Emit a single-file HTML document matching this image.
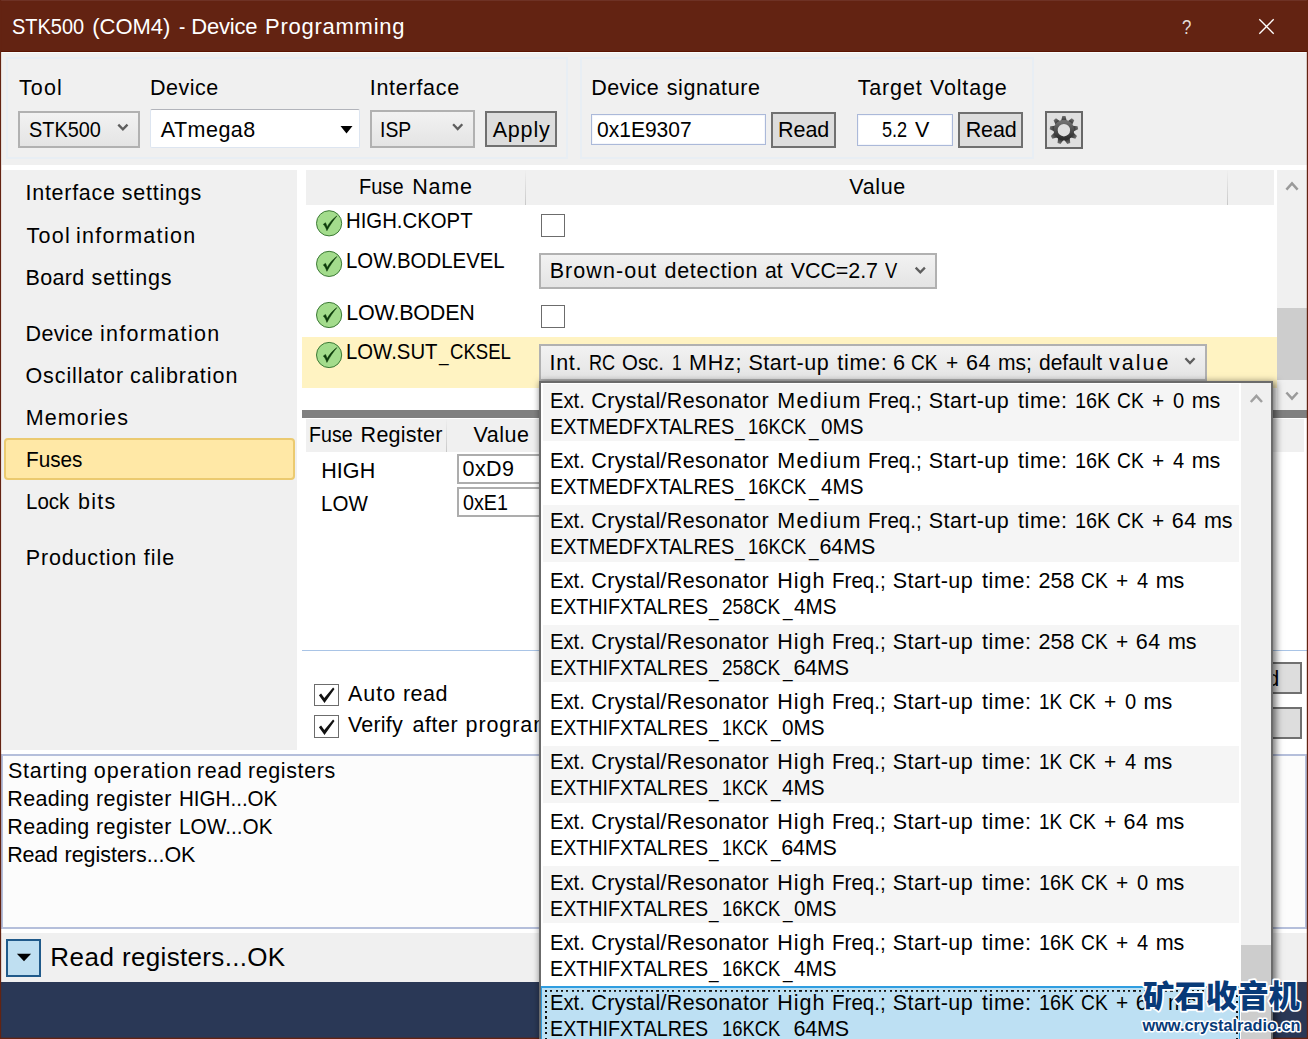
<!DOCTYPE html>
<html lang="en">
<head>
<meta charset="utf-8">
<title>STK500 (COM4) - Device Programming</title>
<style>
html,body{margin:0;padding:0;background:#fff;}
body{width:1308px;height:1039px;overflow:hidden;position:relative;font-family:"Liberation Sans",sans-serif;}
#w{position:absolute;left:0;top:0;width:1308px;height:1039px;overflow:hidden;background:#fff;}
#w div,#w span,#w svg{position:absolute;box-sizing:border-box;}
.t{white-space:pre;line-height:30px;font-family:"Liberation Sans",sans-serif;}
.g{background:#f0f0f0;}
.grp{border:2px solid #e8eef4;}
.cmb{border:2px solid #b1b1b1;background:linear-gradient(#f2f2f2,#e4e4e4);}
.btn{border:2px solid #707070;background:#dddddd;}
.inp{border:1px solid #abb9d9;background:#fff;box-shadow:inset 0 0 0 1px #f4f6fb;}
.inp2{border:2px solid #adadad;background:#fff;}
.chk{border:1px solid #6c6c6c;background:#fff;}
.pbg{left:542.8px;width:696.6px;height:57px;background:#f5f5f5;}
.psel{left:541.3px;width:698.7px;height:60px;background:#bde0f3;border:1px solid #2f9de0;border-top-width:2px;}
.psel:after{content:"";position:absolute;left:2.4px;top:2.2px;right:1px;bottom:-4px;
background:repeating-linear-gradient(90deg,#111 0 2.2px,transparent 2.2px 5.3px) 0 0/100% 1.8px no-repeat,
repeating-linear-gradient(180deg,#111 0 2px,transparent 2px 5.3px) 0 0/2px 100% no-repeat,
repeating-linear-gradient(180deg,#111 0 2px,transparent 2px 5.3px) 100% 0/2px 100% no-repeat;}
</style>
</head>
<body>
<div id="w">
<!-- toolbar -->
<div style="left:0;top:0;width:1308px;height:52px;background:#632312;border-top:1px solid #6e3225;border-bottom:1px solid #5a1402"></div>
<div class="g" style="left:1px;top:52px;width:1306px;height:112.5px;border-top:1px solid #fafdfd;border-left:1px solid #fafdfd"></div>
<div class="grp" style="left:6px;top:57px;width:562px;height:101.5px"></div>
<div class="grp" style="left:580px;top:57px;width:454px;height:101.5px"></div>
<div class="cmb" style="left:18px;top:110.5px;width:121.5px;height:37.2px"></div>
<div style="left:150.2px;top:109px;width:209.6px;height:38.5px;background:#fff;border:1px solid #dde5f0;border-top-color:#b2b4bb;border-radius:2px"></div>
<div class="cmb" style="left:370px;top:110px;width:105px;height:37.7px"></div>
<div class="btn" style="left:485px;top:111px;width:71.7px;height:35.7px"></div>
<div class="inp" style="left:591px;top:114.3px;width:174.7px;height:30.7px"></div>
<div class="btn" style="left:771px;top:112.3px;width:65px;height:35.4px"></div>
<div class="inp" style="left:856.7px;top:114.3px;width:96px;height:31.4px"></div>
<div class="btn" style="left:958.3px;top:112.3px;width:64.4px;height:35.4px"></div>
<div class="btn" style="left:1045px;top:111px;width:38px;height:37.7px;background:#dfdfdf;border-color:#686868"></div>
<!-- nav -->
<div class="g" style="left:2px;top:170px;width:295px;height:580px"></div>
<div style="left:3.5px;top:438px;width:291px;height:41.7px;background:#ffe8a6;border:2px solid #ebca70;border-radius:4px"></div>
<!-- fuse table -->
<div class="g" style="left:306px;top:170.3px;width:968px;height:34.3px"></div>
<div style="left:524.5px;top:170.3px;width:1px;height:34.3px;background:linear-gradient(#efefef,#c8c8c8)"></div>
<div style="left:1227px;top:170.3px;width:1px;height:34.3px;background:linear-gradient(#efefef,#c8c8c8)"></div>
<div style="left:302px;top:337px;width:975.2px;height:51px;background:#fff3c2"></div>
<div class="g" style="left:1277.2px;top:170px;width:29.6px;height:240px"></div>
<div style="left:1277.2px;top:308px;width:29.6px;height:72.3px;background:#cdcdcd"></div>
<div class="chk" style="left:541px;top:213.5px;width:24px;height:23px"></div>
<div class="chk" style="left:541px;top:305px;width:24px;height:22.5px"></div>
<div class="cmb" style="left:539.3px;top:252.7px;width:397.4px;height:36.6px"></div>
<div class="cmb" style="left:539.3px;top:344px;width:667.5px;height:36.6px"></div>
<div style="left:302px;top:410px;width:1004.8px;height:7.8px;background:#808080"></div>
<!-- fuse register -->
<div class="g" style="left:306px;top:419.2px;width:998px;height:33.3px"></div>
<div style="left:446px;top:419.2px;width:1px;height:33.3px;background:linear-gradient(#efefef,#c8c8c8)"></div>
<div class="inp2" style="left:457px;top:454px;width:110px;height:30px"></div>
<div class="inp2" style="left:457px;top:487px;width:110px;height:30px"></div>
<div style="left:302px;top:649.7px;width:1004.8px;height:1px;background:#a9c4e6"></div>
<div class="chk" style="left:314.2px;top:683.5px;width:24.6px;height:22.2px"></div>
<div class="chk" style="left:314.2px;top:715.4px;width:24.6px;height:22.2px"></div>
<div class="btn" style="left:1200px;top:662.3px;width:101.8px;height:32.1px"></div>
<div class="btn" style="left:1200px;top:706.5px;width:101.8px;height:32.9px"></div>
<span class="t" style="left:1225.9px;top:664px;font-size:21.5px;letter-spacing:0.6px">Read</span>
<!-- output -->
<div style="left:1px;top:754px;width:1306px;height:175px;background:#fcfcfc;border:2px solid #b5bfdb"></div>
<!-- status -->
<div class="g" style="left:0;top:933.4px;width:1308px;height:48.4px"></div>
<div style="left:0;top:981.6px;width:1308px;height:58px;background:#2a3856"></div>
<div style="left:6px;top:939px;width:35px;height:38px;background:#bfdff1;border:2px solid #205a8a"></div>
<svg style="left:0;top:0" width="1308" height="1039" viewBox="0 0 1308 1039">
 <defs>
  <linearGradient id="gg" x1="0" y1="0" x2="0" y2="1"><stop offset="0" stop-color="#707070"/><stop offset="1" stop-color="#2e2e2e"/></linearGradient>
  <g id="ok">
   <circle r="12.6" fill="#a3dc8c" stroke="#3c7a35" stroke-width="1"/>
   <path d="M-5.8,1.0 L-3.6,-0.6 C-2.9,0.8 -2.4,2.2 -2.0,3.6 C0.6,-1.0 4.0,-4.8 7.8,-7.4 C4.4,-3.4 1.0,1.6 -2.2,7.4 C-3.0,4.8 -4.2,2.6 -5.8,1.0 Z" fill="#0c3a0a" stroke="#0c3a0a" stroke-width="0.5" stroke-linejoin="round"/>
  </g>
  <path id="chv" d="M-4.6,-2.4 L0,2.4 L4.6,-2.4" fill="none" stroke="#5e5e5e" stroke-width="2.3"/>
  <path id="sch" d="M-5.6,-3.1 L0,3.1 L5.6,-3.1" fill="none" stroke="#9a9a9a" stroke-width="2.5"/>
  <path id="tick" d="M-7.6,0.2 L-5.4,-1.6 L-2.2,3 L6.6,-7.4 L8,-6 L-2,8 Z" fill="#111"/>
 </defs>
 <!-- title buttons -->
 <path d="M1259.3,19.3 L1273.7,33.7 M1273.7,19.3 L1259.3,33.7" stroke="#fff" stroke-width="1.3" fill="none"/>
 <!-- chevrons -->
 <use href="#chv" x="122.9" y="127"/>
 <use href="#chv" x="457.7" y="126.7"/>
 <use href="#chv" x="920.3" y="270"/>
 <use href="#chv" x="1190" y="360.7"/>
 <path d="M340.5,126 h12 l-6,7.4 z" fill="#000"/>
 <path d="M16.9,953.8 h14.2 l-7.1,7.4 z" fill="#000"/>
 <use href="#sch" x="1292" y="186.5" transform="rotate(180 1292 186.5)"/>
 <use href="#sch" x="1292" y="395.6"/>
 <!-- gear -->
 <g transform="translate(1063.9,130.2)">
  <g fill="url(#gg)">
   <path id="tooth" d="M-2.9,-9 L-1.6,-14.2 L1.6,-14.2 L2.9,-9 Z"/>
   <use href="#tooth" transform="rotate(40)"/><use href="#tooth" transform="rotate(80)"/><use href="#tooth" transform="rotate(120)"/><use href="#tooth" transform="rotate(160)"/><use href="#tooth" transform="rotate(200)"/><use href="#tooth" transform="rotate(240)"/><use href="#tooth" transform="rotate(280)"/><use href="#tooth" transform="rotate(320)"/>
  </g>
  <circle r="8.3" fill="none" stroke="url(#gg)" stroke-width="4.2"/>
 </g>
 <!-- fuse ok icons -->
 <use href="#ok" x="329.1" y="223.3"/>
 <use href="#ok" x="329.1" y="263.9"/>
 <use href="#ok" x="329.1" y="315"/>
 <use href="#ok" x="329.1" y="355"/>
 <!-- ticks -->
 <use href="#tick" x="326.5" y="695"/>
 <use href="#tick" x="326.5" y="727"/>
</svg>
<span class="t" style="left:12.39px;top:12.00px;font-size:22px;letter-spacing:0.000px;color:#fff;transform:scaleX(0.9073);transform-origin:0 0;">STK500 </span>
<span class="t" style="left:92.30px;top:12.00px;font-size:22px;letter-spacing:-0.038px;color:#fff;">(COM4) </span>
<span class="t" style="left:179.00px;top:12.00px;font-size:22px;letter-spacing:0.000px;color:#fff;transform:scaleX(0.8571);transform-origin:0 0;">- </span>
<span class="t" style="left:191.30px;top:12.00px;font-size:22px;letter-spacing:-0.202px;color:#fff;">Device </span>
<span class="t" style="left:265.00px;top:12.00px;font-size:22px;letter-spacing:0.749px;color:#fff;">Programming </span>
<span class="t" style="left:1182.15px;top:12.00px;font-size:21px;letter-spacing:0.000px;color:rgba(255,255,255,.85);transform:scaleX(0.8000);transform-origin:0 0;">? </span>
<span class="t" style="left:19.00px;top:73.00px;font-size:21.5px;letter-spacing:1.112px;color:#000;">Tool </span>
<span class="t" style="left:150.00px;top:73.00px;font-size:21.5px;letter-spacing:0.508px;color:#000;">Device </span>
<span class="t" style="left:369.70px;top:73.00px;font-size:21.5px;letter-spacing:0.737px;color:#000;">Interface </span>
<span class="t" style="left:591.30px;top:73.00px;font-size:21.5px;letter-spacing:0.328px;color:#000;">Device </span>
<span class="t" style="left:666.70px;top:73.00px;font-size:21.5px;letter-spacing:0.601px;color:#000;">signature </span>
<span class="t" style="left:857.70px;top:73.00px;font-size:21.5px;letter-spacing:0.844px;color:#000;">Target </span>
<span class="t" style="left:930.00px;top:73.00px;font-size:21.5px;letter-spacing:0.821px;color:#000;">Voltage </span>
<span class="t" style="left:28.50px;top:115.00px;font-size:21.5px;letter-spacing:0.000px;color:#000;transform:scaleX(0.9250);transform-origin:0 0;">STK500 </span>
<span class="t" style="left:160.70px;top:115.00px;font-size:21.5px;letter-spacing:0.490px;color:#000;">ATmega8 </span>
<span class="t" style="left:379.80px;top:115.00px;font-size:21.5px;letter-spacing:0.000px;color:#000;transform:scaleX(0.9005);transform-origin:0 0;">ISP </span>
<span class="t" style="left:492.70px;top:115.00px;font-size:21.5px;letter-spacing:0.817px;color:#000;">Apply </span>
<span class="t" style="left:597.30px;top:115.00px;font-size:21.5px;letter-spacing:0.000px;color:#000;transform:scaleX(0.9773);transform-origin:0 0;">0x1E9307 </span>
<span class="t" style="left:778.00px;top:115.00px;font-size:21.5px;letter-spacing:-0.047px;color:#000;">Read </span>
<span class="t" style="left:882.30px;top:115.00px;font-size:21.5px;letter-spacing:0.000px;color:#000;transform:scaleX(0.8434);transform-origin:0 0;">5.2 </span>
<span class="t" style="left:915.00px;top:115.00px;font-size:21.5px;letter-spacing:0.000px;color:#000;transform:scaleX(1.0000);transform-origin:0 0;">V </span>
<span class="t" style="left:965.70px;top:115.00px;font-size:21.5px;letter-spacing:-0.147px;color:#000;">Read </span>
<span class="t" style="left:25.50px;top:178.00px;font-size:21.5px;letter-spacing:0.725px;color:#000;">Interface </span>
<span class="t" style="left:121.80px;top:178.00px;font-size:21.5px;letter-spacing:0.779px;color:#000;">settings </span>
<span class="t" style="left:26.50px;top:221.00px;font-size:21.5px;letter-spacing:1.245px;color:#000;">Tool </span>
<span class="t" style="left:75.90px;top:221.00px;font-size:21.5px;letter-spacing:1.290px;color:#000;">information </span>
<span class="t" style="left:25.50px;top:263.00px;font-size:21.5px;letter-spacing:0.321px;color:#000;">Board </span>
<span class="t" style="left:91.60px;top:263.00px;font-size:21.5px;letter-spacing:0.836px;color:#000;">settings </span>
<span class="t" style="left:25.50px;top:319.00px;font-size:21.5px;letter-spacing:0.368px;color:#000;">Device </span>
<span class="t" style="left:99.90px;top:319.00px;font-size:21.5px;letter-spacing:1.290px;color:#000;">information </span>
<span class="t" style="left:25.50px;top:361.00px;font-size:21.5px;letter-spacing:0.884px;color:#000;">Oscillator </span>
<span class="t" style="left:129.90px;top:361.00px;font-size:21.5px;letter-spacing:0.946px;color:#000;">calibration </span>
<span class="t" style="left:25.70px;top:403.00px;font-size:21.5px;letter-spacing:1.125px;color:#000;">Memories </span>
<span class="t" style="left:25.74px;top:445.00px;font-size:21.5px;letter-spacing:0.000px;color:#000;transform:scaleX(0.9648);transform-origin:0 0;">Fuses </span>
<span class="t" style="left:25.75px;top:487.00px;font-size:21.5px;letter-spacing:0.000px;color:#000;transform:scaleX(0.9538);transform-origin:0 0;">Lock </span>
<span class="t" style="left:78.00px;top:487.00px;font-size:21.5px;letter-spacing:1.231px;color:#000;">bits </span>
<span class="t" style="left:25.70px;top:543.00px;font-size:21.5px;letter-spacing:0.852px;color:#000;">Production </span>
<span class="t" style="left:143.80px;top:543.00px;font-size:21.5px;letter-spacing:0.991px;color:#000;">file </span>
<span class="t" style="left:359.07px;top:172.00px;font-size:21.5px;letter-spacing:0.000px;color:#000;transform:scaleX(0.9315);transform-origin:0 0;">Fuse </span>
<span class="t" style="left:412.30px;top:172.00px;font-size:21.5px;letter-spacing:0.769px;color:#000;">Name </span>
<span class="t" style="left:849.30px;top:172.00px;font-size:21.5px;letter-spacing:0.641px;color:#000;">Value </span>
<span class="t" style="left:346.25px;top:206.00px;font-size:21.5px;letter-spacing:0.000px;color:#000;transform:scaleX(0.9461);transform-origin:0 0;">HIGH.CKOPT </span>
<span class="t" style="left:346.25px;top:246.00px;font-size:21.5px;letter-spacing:0.000px;color:#000;transform:scaleX(0.9487);transform-origin:0 0;">LOW.BODLEVEL </span>
<span class="t" style="left:346.20px;top:298.00px;font-size:21.5px;letter-spacing:-0.199px;color:#000;">LOW.BODEN </span>
<span class="t" style="left:346.25px;top:337.00px;font-size:21.5px;letter-spacing:0.000px;color:#000;transform:scaleX(0.9453);transform-origin:0 0;">LOW.SUT</span><span class="t" style="left:439.25px;top:337.00px;font-size:21.5px;letter-spacing:0.000px;color:#000;transform:translateY(1.5px) scaleX(0.8000);transform-origin:0 0;">_</span><span class="t" style="left:449.64px;top:337.00px;font-size:21.5px;letter-spacing:0.000px;color:#000;transform:scaleX(0.8642);transform-origin:0 0;">CKSEL </span>
<span class="t" style="left:549.70px;top:256.00px;font-size:21.5px;letter-spacing:1.061px;color:#000;">Brown-out </span>
<span class="t" style="left:664.50px;top:256.00px;font-size:21.5px;letter-spacing:0.712px;color:#000;">detection </span>
<span class="t" style="left:765.40px;top:256.00px;font-size:21.5px;letter-spacing:0.000px;color:#000;transform:scaleX(0.9857);transform-origin:0 0;">at </span>
<span class="t" style="left:790.80px;top:256.00px;font-size:21.5px;letter-spacing:-0.113px;color:#000;">VCC=2.7 </span>
<span class="t" style="left:885.00px;top:256.00px;font-size:21.5px;letter-spacing:0.000px;color:#000;transform:scaleX(0.8533);transform-origin:0 0;">V </span>
<span class="t" style="left:549.50px;top:348.00px;font-size:21.5px;letter-spacing:0.665px;color:#000;">Int. </span>
<span class="t" style="left:588.86px;top:348.00px;font-size:21.5px;letter-spacing:0.000px;color:#000;transform:scaleX(0.8433);transform-origin:0 0;">RC </span>
<span class="t" style="left:621.75px;top:348.00px;font-size:21.5px;letter-spacing:0.000px;color:#000;transform:scaleX(0.9497);transform-origin:0 0;">Osc. </span>
<span class="t" style="left:671.85px;top:348.00px;font-size:21.5px;letter-spacing:0.000px;color:#000;transform:scaleX(0.8000);transform-origin:0 0;">1 </span>
<span class="t" style="left:689.00px;top:348.00px;font-size:21.5px;letter-spacing:0.805px;color:#000;">MHz; </span>
<span class="t" style="left:748.40px;top:348.00px;font-size:21.5px;letter-spacing:0.540px;color:#000;">Start-up </span>
<span class="t" style="left:837.30px;top:348.00px;font-size:21.5px;letter-spacing:0.721px;color:#000;">time: </span>
<span class="t" style="left:892.89px;top:348.00px;font-size:21.5px;letter-spacing:0.000px;color:#000;transform:scaleX(1.0091);transform-origin:0 0;">6 </span>
<span class="t" style="left:911.31px;top:348.00px;font-size:21.5px;letter-spacing:0.000px;color:#000;transform:scaleX(0.8873);transform-origin:0 0;">CK </span>
<span class="t" style="left:946.13px;top:348.00px;font-size:21.5px;letter-spacing:0.000px;color:#000;transform:scaleX(0.9727);transform-origin:0 0;">+ </span>
<span class="t" style="left:966.10px;top:348.00px;font-size:21.5px;letter-spacing:0.343px;color:#000;">64 </span>
<span class="t" style="left:997.52px;top:348.00px;font-size:21.5px;letter-spacing:0.000px;color:#000;transform:scaleX(0.9798);transform-origin:0 0;">ms; </span>
<span class="t" style="left:1038.60px;top:348.00px;font-size:21.5px;letter-spacing:0.000px;color:#000;transform:scaleX(0.9755);transform-origin:0 0;">default </span>
<span class="t" style="left:1108.90px;top:348.00px;font-size:21.5px;letter-spacing:2.065px;color:#000;">value </span>
<span class="t" style="left:308.79px;top:420.00px;font-size:21.5px;letter-spacing:0.000px;color:#000;transform:scaleX(0.9119);transform-origin:0 0;">Fuse </span>
<span class="t" style="left:360.60px;top:420.00px;font-size:21.5px;letter-spacing:0.257px;color:#000;">Register </span>
<span class="t" style="left:473.60px;top:420.00px;font-size:21.5px;letter-spacing:0.491px;color:#000;">Value </span>
<span class="t" style="left:321.20px;top:456.00px;font-size:21.5px;letter-spacing:0.092px;color:#000;">HIGH </span>
<span class="t" style="left:321.24px;top:489.00px;font-size:21.5px;letter-spacing:0.000px;color:#000;transform:scaleX(0.9552);transform-origin:0 0;">LOW </span>
<span class="t" style="left:462.50px;top:454.00px;font-size:21.5px;letter-spacing:0.422px;color:#000;">0xD9 </span>
<span class="t" style="left:462.50px;top:488.00px;font-size:21.5px;letter-spacing:0.000px;color:#000;transform:scaleX(0.9158);transform-origin:0 0;">0xE1 </span>
<span class="t" style="left:348.00px;top:679.00px;font-size:21.5px;letter-spacing:1.010px;color:#000;">Auto </span>
<span class="t" style="left:403.00px;top:679.00px;font-size:21.5px;letter-spacing:0.442px;color:#000;">read </span>
<span class="t" style="left:348.00px;top:710.00px;font-size:21.5px;letter-spacing:0.196px;color:#000;">Verify </span>
<span class="t" style="left:412.60px;top:710.00px;font-size:21.5px;letter-spacing:0.510px;color:#000;">after </span>
<span class="t" style="left:465.50px;top:710.00px;font-size:21.5px;letter-spacing:0.930px;color:#000;">programming </span>
<span class="t" style="left:8.00px;top:756.00px;font-size:21.5px;letter-spacing:0.723px;color:#000;">Starting </span>
<span class="t" style="left:93.70px;top:756.00px;font-size:21.5px;letter-spacing:1.013px;color:#000;">operation </span>
<span class="t" style="left:197.00px;top:756.00px;font-size:21.5px;letter-spacing:0.575px;color:#000;">read </span>
<span class="t" style="left:247.90px;top:756.00px;font-size:21.5px;letter-spacing:0.614px;color:#000;">registers </span>
<span class="t" style="left:7.30px;top:784.00px;font-size:21.5px;letter-spacing:0.311px;color:#000;">Reading </span>
<span class="t" style="left:95.90px;top:784.00px;font-size:21.5px;letter-spacing:0.553px;color:#000;">register </span>
<span class="t" style="left:178.84px;top:784.00px;font-size:21.5px;letter-spacing:0.000px;color:#000;transform:scaleX(0.9571);transform-origin:0 0;">HIGH...OK </span>
<span class="t" style="left:7.30px;top:812.00px;font-size:21.5px;letter-spacing:0.311px;color:#000;">Reading </span>
<span class="t" style="left:95.90px;top:812.00px;font-size:21.5px;letter-spacing:0.553px;color:#000;">register </span>
<span class="t" style="left:178.83px;top:812.00px;font-size:21.5px;letter-spacing:0.000px;color:#000;transform:scaleX(0.9665);transform-origin:0 0;">LOW...OK </span>
<span class="t" style="left:7.30px;top:840.00px;font-size:21.5px;letter-spacing:-0.247px;color:#000;">Read </span>
<span class="t" style="left:64.60px;top:840.00px;font-size:21.5px;letter-spacing:-0.045px;color:#000;">registers...OK </span>
<span class="t" style="left:50.20px;top:942.00px;font-size:26px;letter-spacing:0.501px;color:#000;">Read </span>
<span class="t" style="left:122.10px;top:942.00px;font-size:26px;letter-spacing:0.316px;color:#000;">registers...OK </span>

<svg style="left:0;top:0" width="1308" height="1039" viewBox="0 0 1308 1039"><rect x="0" y="0" width="1.15" height="1039" fill="#632312"/><rect x="1306.8" y="0" width="1.2" height="1039" fill="#632312"/><rect x="0" y="1037.7" width="1308" height="1.3" fill="#632312"/></svg>
<!-- popup -->
<div style="left:539.3px;top:381.3px;width:733.8px;height:700px;background:#fff;border:2px solid #6b6b6b;box-shadow:2px 2px 7px 1px rgba(0,0,0,.55)"></div>
<div class="pbg" style="top:384.30px"></div>
<div class="pbg" style="top:504.84px"></div>
<div class="pbg" style="top:625.38px"></div>
<div class="pbg" style="top:745.92px"></div>
<div class="pbg" style="top:866.46px"></div>
<div class="psel" style="top:986px"></div>
<div class="g" style="left:1241.2px;top:383.3px;width:29.9px;height:660px"></div>
<div style="left:1241.2px;top:944.6px;width:29.9px;height:100px;background:#cdcdcd"></div>
<svg style="left:1241px;top:385px" width="30" height="30" viewBox="0 0 30 30"><path d="M9.8,17 L15.4,10.8 L21,17" fill="none" stroke="#a0a0a0" stroke-width="2.5"/></svg>
<span class="t" style="left:549.96px;top:386.00px;font-size:21.5px;letter-spacing:0.000px;color:#000;transform:scaleX(0.9411);transform-origin:0 0;">Ext. </span>
<span class="t" style="left:591.30px;top:386.00px;font-size:21.5px;letter-spacing:0.331px;color:#000;">Crystal/Resonator </span>
<span class="t" style="left:777.30px;top:386.00px;font-size:21.5px;letter-spacing:1.308px;color:#000;">Medium </span>
<span class="t" style="left:867.74px;top:386.00px;font-size:21.5px;letter-spacing:0.000px;color:#000;transform:scaleX(0.9561);transform-origin:0 0;">Freq.; </span>
<span class="t" style="left:928.70px;top:386.00px;font-size:21.5px;letter-spacing:0.511px;color:#000;">Start-up </span>
<span class="t" style="left:1018.00px;top:386.00px;font-size:21.5px;letter-spacing:0.596px;color:#000;">time: </span>
<span class="t" style="left:1074.68px;top:386.00px;font-size:21.5px;letter-spacing:0.000px;color:#000;transform:scaleX(0.9231);transform-origin:0 0;">16K </span>
<span class="t" style="left:1117.11px;top:386.00px;font-size:21.5px;letter-spacing:0.000px;color:#000;transform:scaleX(0.8941);transform-origin:0 0;">CK </span>
<span class="t" style="left:1152.23px;top:386.00px;font-size:21.5px;letter-spacing:0.000px;color:#000;transform:scaleX(0.9727);transform-origin:0 0;">+ </span>
<span class="t" style="left:1172.80px;top:386.00px;font-size:21.5px;letter-spacing:0.000px;color:#000;transform:scaleX(0.9333);transform-origin:0 0;">0 </span>
<span class="t" style="left:1191.70px;top:386.00px;font-size:21.5px;letter-spacing:-0.010px;color:#000;">ms </span>
<span class="t" style="left:549.97px;top:412.00px;font-size:21.5px;letter-spacing:0.000px;color:#000;transform:scaleX(0.9258);transform-origin:0 0;">EXTMEDFXTALRES</span><span class="t" style="left:734.70px;top:412.00px;font-size:21.5px;letter-spacing:0.000px;color:#000;transform:translateY(1.5px) scaleX(0.8000);transform-origin:0 0;">_</span><span class="t" style="left:747.84px;top:412.00px;font-size:21.5px;letter-spacing:0.000px;color:#000;transform:scaleX(0.8557);transform-origin:0 0;">16KCK</span><span class="t" style="left:809.20px;top:412.00px;font-size:21.5px;letter-spacing:0.000px;color:#000;transform:translateY(1.5px) scaleX(0.8000);transform-origin:0 0;">_</span><span class="t" style="left:820.50px;top:412.00px;font-size:21.5px;letter-spacing:0.000px;color:#000;transform:scaleX(0.9620);transform-origin:0 0;">0MS </span>
<span class="t" style="left:549.96px;top:446.00px;font-size:21.5px;letter-spacing:0.000px;color:#000;transform:scaleX(0.9411);transform-origin:0 0;">Ext. </span>
<span class="t" style="left:591.30px;top:446.00px;font-size:21.5px;letter-spacing:0.331px;color:#000;">Crystal/Resonator </span>
<span class="t" style="left:777.30px;top:446.00px;font-size:21.5px;letter-spacing:1.308px;color:#000;">Medium </span>
<span class="t" style="left:867.74px;top:446.00px;font-size:21.5px;letter-spacing:0.000px;color:#000;transform:scaleX(0.9561);transform-origin:0 0;">Freq.; </span>
<span class="t" style="left:928.70px;top:446.00px;font-size:21.5px;letter-spacing:0.511px;color:#000;">Start-up </span>
<span class="t" style="left:1018.00px;top:446.00px;font-size:21.5px;letter-spacing:0.596px;color:#000;">time: </span>
<span class="t" style="left:1074.68px;top:446.00px;font-size:21.5px;letter-spacing:0.000px;color:#000;transform:scaleX(0.9231);transform-origin:0 0;">16K </span>
<span class="t" style="left:1117.11px;top:446.00px;font-size:21.5px;letter-spacing:0.000px;color:#000;transform:scaleX(0.8941);transform-origin:0 0;">CK </span>
<span class="t" style="left:1152.23px;top:446.00px;font-size:21.5px;letter-spacing:0.000px;color:#000;transform:scaleX(0.9727);transform-origin:0 0;">+ </span>
<span class="t" style="left:1172.80px;top:446.00px;font-size:21.5px;letter-spacing:0.000px;color:#000;transform:scaleX(0.9333);transform-origin:0 0;">4 </span>
<span class="t" style="left:1191.70px;top:446.00px;font-size:21.5px;letter-spacing:-0.010px;color:#000;">ms </span>
<span class="t" style="left:549.97px;top:472.00px;font-size:21.5px;letter-spacing:0.000px;color:#000;transform:scaleX(0.9258);transform-origin:0 0;">EXTMEDFXTALRES</span><span class="t" style="left:734.70px;top:472.00px;font-size:21.5px;letter-spacing:0.000px;color:#000;transform:translateY(1.5px) scaleX(0.8000);transform-origin:0 0;">_</span><span class="t" style="left:747.84px;top:472.00px;font-size:21.5px;letter-spacing:0.000px;color:#000;transform:scaleX(0.8557);transform-origin:0 0;">16KCK</span><span class="t" style="left:809.20px;top:472.00px;font-size:21.5px;letter-spacing:0.000px;color:#000;transform:translateY(1.5px) scaleX(0.8000);transform-origin:0 0;">_</span><span class="t" style="left:820.50px;top:472.00px;font-size:21.5px;letter-spacing:0.000px;color:#000;transform:scaleX(0.9620);transform-origin:0 0;">4MS </span>
<span class="t" style="left:549.96px;top:506.00px;font-size:21.5px;letter-spacing:0.000px;color:#000;transform:scaleX(0.9411);transform-origin:0 0;">Ext. </span>
<span class="t" style="left:591.30px;top:506.00px;font-size:21.5px;letter-spacing:0.331px;color:#000;">Crystal/Resonator </span>
<span class="t" style="left:777.30px;top:506.00px;font-size:21.5px;letter-spacing:1.308px;color:#000;">Medium </span>
<span class="t" style="left:867.74px;top:506.00px;font-size:21.5px;letter-spacing:0.000px;color:#000;transform:scaleX(0.9561);transform-origin:0 0;">Freq.; </span>
<span class="t" style="left:928.70px;top:506.00px;font-size:21.5px;letter-spacing:0.511px;color:#000;">Start-up </span>
<span class="t" style="left:1018.00px;top:506.00px;font-size:21.5px;letter-spacing:0.596px;color:#000;">time: </span>
<span class="t" style="left:1074.68px;top:506.00px;font-size:21.5px;letter-spacing:0.000px;color:#000;transform:scaleX(0.9231);transform-origin:0 0;">16K </span>
<span class="t" style="left:1117.11px;top:506.00px;font-size:21.5px;letter-spacing:0.000px;color:#000;transform:scaleX(0.8941);transform-origin:0 0;">CK </span>
<span class="t" style="left:1152.23px;top:506.00px;font-size:21.5px;letter-spacing:0.000px;color:#000;transform:scaleX(0.9727);transform-origin:0 0;">+ </span>
<span class="t" style="left:1171.80px;top:506.00px;font-size:21.5px;letter-spacing:0.443px;color:#000;">64 </span>
<span class="t" style="left:1203.90px;top:506.00px;font-size:21.5px;letter-spacing:-0.010px;color:#000;">ms </span>
<span class="t" style="left:549.97px;top:532.00px;font-size:21.5px;letter-spacing:0.000px;color:#000;transform:scaleX(0.9258);transform-origin:0 0;">EXTMEDFXTALRES</span><span class="t" style="left:734.70px;top:532.00px;font-size:21.5px;letter-spacing:0.000px;color:#000;transform:translateY(1.5px) scaleX(0.8000);transform-origin:0 0;">_</span><span class="t" style="left:747.84px;top:532.00px;font-size:21.5px;letter-spacing:0.000px;color:#000;transform:scaleX(0.8557);transform-origin:0 0;">16KCK</span><span class="t" style="left:809.20px;top:532.00px;font-size:21.5px;letter-spacing:0.000px;color:#000;transform:translateY(1.5px) scaleX(0.8000);transform-origin:0 0;">_</span><span class="t" style="left:819.50px;top:532.00px;font-size:21.5px;letter-spacing:-0.141px;color:#000;">64MS </span>
<span class="t" style="left:549.96px;top:566.00px;font-size:21.5px;letter-spacing:0.000px;color:#000;transform:scaleX(0.9411);transform-origin:0 0;">Ext. </span>
<span class="t" style="left:591.30px;top:566.00px;font-size:21.5px;letter-spacing:0.331px;color:#000;">Crystal/Resonator </span>
<span class="t" style="left:777.30px;top:566.00px;font-size:21.5px;letter-spacing:0.947px;color:#000;">High </span>
<span class="t" style="left:831.74px;top:566.00px;font-size:21.5px;letter-spacing:0.000px;color:#000;transform:scaleX(0.9561);transform-origin:0 0;">Freq.; </span>
<span class="t" style="left:892.70px;top:566.00px;font-size:21.5px;letter-spacing:0.511px;color:#000;">Start-up </span>
<span class="t" style="left:982.00px;top:566.00px;font-size:21.5px;letter-spacing:0.596px;color:#000;">time: </span>
<span class="t" style="left:1038.60px;top:566.00px;font-size:21.5px;letter-spacing:0.043px;color:#000;">258 </span>
<span class="t" style="left:1081.11px;top:566.00px;font-size:21.5px;letter-spacing:0.000px;color:#000;transform:scaleX(0.8941);transform-origin:0 0;">CK </span>
<span class="t" style="left:1116.23px;top:566.00px;font-size:21.5px;letter-spacing:0.000px;color:#000;transform:scaleX(0.9727);transform-origin:0 0;">+ </span>
<span class="t" style="left:1136.80px;top:566.00px;font-size:21.5px;letter-spacing:0.000px;color:#000;transform:scaleX(0.9333);transform-origin:0 0;">4 </span>
<span class="t" style="left:1155.70px;top:566.00px;font-size:21.5px;letter-spacing:-0.010px;color:#000;">ms </span>
<span class="t" style="left:549.98px;top:592.00px;font-size:21.5px;letter-spacing:0.000px;color:#000;transform:scaleX(0.9155);transform-origin:0 0;">EXTHIFXTALRES</span><span class="t" style="left:708.60px;top:592.00px;font-size:21.5px;letter-spacing:0.000px;color:#000;transform:translateY(1.5px) scaleX(0.8000);transform-origin:0 0;">_</span><span class="t" style="left:721.71px;top:592.00px;font-size:21.5px;letter-spacing:0.000px;color:#000;transform:scaleX(0.8869);transform-origin:0 0;">258CK</span><span class="t" style="left:783.10px;top:592.00px;font-size:21.5px;letter-spacing:0.000px;color:#000;transform:translateY(1.5px) scaleX(0.8000);transform-origin:0 0;">_</span><span class="t" style="left:794.40px;top:592.00px;font-size:21.5px;letter-spacing:0.000px;color:#000;transform:scaleX(0.9620);transform-origin:0 0;">4MS </span>
<span class="t" style="left:549.96px;top:627.00px;font-size:21.5px;letter-spacing:0.000px;color:#000;transform:scaleX(0.9411);transform-origin:0 0;">Ext. </span>
<span class="t" style="left:591.30px;top:627.00px;font-size:21.5px;letter-spacing:0.331px;color:#000;">Crystal/Resonator </span>
<span class="t" style="left:777.30px;top:627.00px;font-size:21.5px;letter-spacing:0.947px;color:#000;">High </span>
<span class="t" style="left:831.74px;top:627.00px;font-size:21.5px;letter-spacing:0.000px;color:#000;transform:scaleX(0.9561);transform-origin:0 0;">Freq.; </span>
<span class="t" style="left:892.70px;top:627.00px;font-size:21.5px;letter-spacing:0.511px;color:#000;">Start-up </span>
<span class="t" style="left:982.00px;top:627.00px;font-size:21.5px;letter-spacing:0.596px;color:#000;">time: </span>
<span class="t" style="left:1038.60px;top:627.00px;font-size:21.5px;letter-spacing:0.043px;color:#000;">258 </span>
<span class="t" style="left:1081.11px;top:627.00px;font-size:21.5px;letter-spacing:0.000px;color:#000;transform:scaleX(0.8941);transform-origin:0 0;">CK </span>
<span class="t" style="left:1116.23px;top:627.00px;font-size:21.5px;letter-spacing:0.000px;color:#000;transform:scaleX(0.9727);transform-origin:0 0;">+ </span>
<span class="t" style="left:1135.80px;top:627.00px;font-size:21.5px;letter-spacing:0.443px;color:#000;">64 </span>
<span class="t" style="left:1167.90px;top:627.00px;font-size:21.5px;letter-spacing:-0.010px;color:#000;">ms </span>
<span class="t" style="left:549.98px;top:653.00px;font-size:21.5px;letter-spacing:0.000px;color:#000;transform:scaleX(0.9155);transform-origin:0 0;">EXTHIFXTALRES</span><span class="t" style="left:708.60px;top:653.00px;font-size:21.5px;letter-spacing:0.000px;color:#000;transform:translateY(1.5px) scaleX(0.8000);transform-origin:0 0;">_</span><span class="t" style="left:721.71px;top:653.00px;font-size:21.5px;letter-spacing:0.000px;color:#000;transform:scaleX(0.8869);transform-origin:0 0;">258CK</span><span class="t" style="left:783.10px;top:653.00px;font-size:21.5px;letter-spacing:0.000px;color:#000;transform:translateY(1.5px) scaleX(0.8000);transform-origin:0 0;">_</span><span class="t" style="left:793.40px;top:653.00px;font-size:21.5px;letter-spacing:-0.141px;color:#000;">64MS </span>
<span class="t" style="left:549.96px;top:687.00px;font-size:21.5px;letter-spacing:0.000px;color:#000;transform:scaleX(0.9411);transform-origin:0 0;">Ext. </span>
<span class="t" style="left:591.30px;top:687.00px;font-size:21.5px;letter-spacing:0.331px;color:#000;">Crystal/Resonator </span>
<span class="t" style="left:777.30px;top:687.00px;font-size:21.5px;letter-spacing:0.947px;color:#000;">High </span>
<span class="t" style="left:831.74px;top:687.00px;font-size:21.5px;letter-spacing:0.000px;color:#000;transform:scaleX(0.9561);transform-origin:0 0;">Freq.; </span>
<span class="t" style="left:892.70px;top:687.00px;font-size:21.5px;letter-spacing:0.511px;color:#000;">Start-up </span>
<span class="t" style="left:982.00px;top:687.00px;font-size:21.5px;letter-spacing:0.596px;color:#000;">time: </span>
<span class="t" style="left:1038.72px;top:687.00px;font-size:21.5px;letter-spacing:0.000px;color:#000;transform:scaleX(0.8784);transform-origin:0 0;">1K </span>
<span class="t" style="left:1068.91px;top:687.00px;font-size:21.5px;letter-spacing:0.000px;color:#000;transform:scaleX(0.8941);transform-origin:0 0;">CK </span>
<span class="t" style="left:1104.03px;top:687.00px;font-size:21.5px;letter-spacing:0.000px;color:#000;transform:scaleX(0.9727);transform-origin:0 0;">+ </span>
<span class="t" style="left:1124.60px;top:687.00px;font-size:21.5px;letter-spacing:0.000px;color:#000;transform:scaleX(0.9333);transform-origin:0 0;">0 </span>
<span class="t" style="left:1143.50px;top:687.00px;font-size:21.5px;letter-spacing:-0.010px;color:#000;">ms </span>
<span class="t" style="left:549.98px;top:713.00px;font-size:21.5px;letter-spacing:0.000px;color:#000;transform:scaleX(0.9155);transform-origin:0 0;">EXTHIFXTALRES</span><span class="t" style="left:708.60px;top:713.00px;font-size:21.5px;letter-spacing:0.000px;color:#000;transform:translateY(1.5px) scaleX(0.8000);transform-origin:0 0;">_</span><span class="t" style="left:721.78px;top:713.00px;font-size:21.5px;letter-spacing:0.000px;color:#000;transform:scaleX(0.8204);transform-origin:0 0;">1KCK</span><span class="t" style="left:770.90px;top:713.00px;font-size:21.5px;letter-spacing:0.000px;color:#000;transform:translateY(1.5px) scaleX(0.8000);transform-origin:0 0;">_</span><span class="t" style="left:782.20px;top:713.00px;font-size:21.5px;letter-spacing:0.000px;color:#000;transform:scaleX(0.9620);transform-origin:0 0;">0MS </span>
<span class="t" style="left:549.96px;top:747.00px;font-size:21.5px;letter-spacing:0.000px;color:#000;transform:scaleX(0.9411);transform-origin:0 0;">Ext. </span>
<span class="t" style="left:591.30px;top:747.00px;font-size:21.5px;letter-spacing:0.331px;color:#000;">Crystal/Resonator </span>
<span class="t" style="left:777.30px;top:747.00px;font-size:21.5px;letter-spacing:0.947px;color:#000;">High </span>
<span class="t" style="left:831.74px;top:747.00px;font-size:21.5px;letter-spacing:0.000px;color:#000;transform:scaleX(0.9561);transform-origin:0 0;">Freq.; </span>
<span class="t" style="left:892.70px;top:747.00px;font-size:21.5px;letter-spacing:0.511px;color:#000;">Start-up </span>
<span class="t" style="left:982.00px;top:747.00px;font-size:21.5px;letter-spacing:0.596px;color:#000;">time: </span>
<span class="t" style="left:1038.72px;top:747.00px;font-size:21.5px;letter-spacing:0.000px;color:#000;transform:scaleX(0.8784);transform-origin:0 0;">1K </span>
<span class="t" style="left:1068.91px;top:747.00px;font-size:21.5px;letter-spacing:0.000px;color:#000;transform:scaleX(0.8941);transform-origin:0 0;">CK </span>
<span class="t" style="left:1104.03px;top:747.00px;font-size:21.5px;letter-spacing:0.000px;color:#000;transform:scaleX(0.9727);transform-origin:0 0;">+ </span>
<span class="t" style="left:1124.60px;top:747.00px;font-size:21.5px;letter-spacing:0.000px;color:#000;transform:scaleX(0.9333);transform-origin:0 0;">4 </span>
<span class="t" style="left:1143.50px;top:747.00px;font-size:21.5px;letter-spacing:-0.010px;color:#000;">ms </span>
<span class="t" style="left:549.98px;top:773.00px;font-size:21.5px;letter-spacing:0.000px;color:#000;transform:scaleX(0.9155);transform-origin:0 0;">EXTHIFXTALRES</span><span class="t" style="left:708.60px;top:773.00px;font-size:21.5px;letter-spacing:0.000px;color:#000;transform:translateY(1.5px) scaleX(0.8000);transform-origin:0 0;">_</span><span class="t" style="left:721.78px;top:773.00px;font-size:21.5px;letter-spacing:0.000px;color:#000;transform:scaleX(0.8204);transform-origin:0 0;">1KCK</span><span class="t" style="left:770.90px;top:773.00px;font-size:21.5px;letter-spacing:0.000px;color:#000;transform:translateY(1.5px) scaleX(0.8000);transform-origin:0 0;">_</span><span class="t" style="left:782.20px;top:773.00px;font-size:21.5px;letter-spacing:0.000px;color:#000;transform:scaleX(0.9620);transform-origin:0 0;">4MS </span>
<span class="t" style="left:549.96px;top:807.00px;font-size:21.5px;letter-spacing:0.000px;color:#000;transform:scaleX(0.9411);transform-origin:0 0;">Ext. </span>
<span class="t" style="left:591.30px;top:807.00px;font-size:21.5px;letter-spacing:0.331px;color:#000;">Crystal/Resonator </span>
<span class="t" style="left:777.30px;top:807.00px;font-size:21.5px;letter-spacing:0.947px;color:#000;">High </span>
<span class="t" style="left:831.74px;top:807.00px;font-size:21.5px;letter-spacing:0.000px;color:#000;transform:scaleX(0.9561);transform-origin:0 0;">Freq.; </span>
<span class="t" style="left:892.70px;top:807.00px;font-size:21.5px;letter-spacing:0.511px;color:#000;">Start-up </span>
<span class="t" style="left:982.00px;top:807.00px;font-size:21.5px;letter-spacing:0.596px;color:#000;">time: </span>
<span class="t" style="left:1038.72px;top:807.00px;font-size:21.5px;letter-spacing:0.000px;color:#000;transform:scaleX(0.8784);transform-origin:0 0;">1K </span>
<span class="t" style="left:1068.91px;top:807.00px;font-size:21.5px;letter-spacing:0.000px;color:#000;transform:scaleX(0.8941);transform-origin:0 0;">CK </span>
<span class="t" style="left:1104.03px;top:807.00px;font-size:21.5px;letter-spacing:0.000px;color:#000;transform:scaleX(0.9727);transform-origin:0 0;">+ </span>
<span class="t" style="left:1123.60px;top:807.00px;font-size:21.5px;letter-spacing:0.443px;color:#000;">64 </span>
<span class="t" style="left:1155.70px;top:807.00px;font-size:21.5px;letter-spacing:-0.010px;color:#000;">ms </span>
<span class="t" style="left:549.98px;top:833.00px;font-size:21.5px;letter-spacing:0.000px;color:#000;transform:scaleX(0.9155);transform-origin:0 0;">EXTHIFXTALRES</span><span class="t" style="left:708.60px;top:833.00px;font-size:21.5px;letter-spacing:0.000px;color:#000;transform:translateY(1.5px) scaleX(0.8000);transform-origin:0 0;">_</span><span class="t" style="left:721.78px;top:833.00px;font-size:21.5px;letter-spacing:0.000px;color:#000;transform:scaleX(0.8204);transform-origin:0 0;">1KCK</span><span class="t" style="left:770.90px;top:833.00px;font-size:21.5px;letter-spacing:0.000px;color:#000;transform:translateY(1.5px) scaleX(0.8000);transform-origin:0 0;">_</span><span class="t" style="left:781.20px;top:833.00px;font-size:21.5px;letter-spacing:-0.141px;color:#000;">64MS </span>
<span class="t" style="left:549.96px;top:868.00px;font-size:21.5px;letter-spacing:0.000px;color:#000;transform:scaleX(0.9411);transform-origin:0 0;">Ext. </span>
<span class="t" style="left:591.30px;top:868.00px;font-size:21.5px;letter-spacing:0.331px;color:#000;">Crystal/Resonator </span>
<span class="t" style="left:777.30px;top:868.00px;font-size:21.5px;letter-spacing:0.947px;color:#000;">High </span>
<span class="t" style="left:831.74px;top:868.00px;font-size:21.5px;letter-spacing:0.000px;color:#000;transform:scaleX(0.9561);transform-origin:0 0;">Freq.; </span>
<span class="t" style="left:892.70px;top:868.00px;font-size:21.5px;letter-spacing:0.511px;color:#000;">Start-up </span>
<span class="t" style="left:982.00px;top:868.00px;font-size:21.5px;letter-spacing:0.596px;color:#000;">time: </span>
<span class="t" style="left:1038.68px;top:868.00px;font-size:21.5px;letter-spacing:0.000px;color:#000;transform:scaleX(0.9231);transform-origin:0 0;">16K </span>
<span class="t" style="left:1081.11px;top:868.00px;font-size:21.5px;letter-spacing:0.000px;color:#000;transform:scaleX(0.8941);transform-origin:0 0;">CK </span>
<span class="t" style="left:1116.23px;top:868.00px;font-size:21.5px;letter-spacing:0.000px;color:#000;transform:scaleX(0.9727);transform-origin:0 0;">+ </span>
<span class="t" style="left:1136.80px;top:868.00px;font-size:21.5px;letter-spacing:0.000px;color:#000;transform:scaleX(0.9333);transform-origin:0 0;">0 </span>
<span class="t" style="left:1155.70px;top:868.00px;font-size:21.5px;letter-spacing:-0.010px;color:#000;">ms </span>
<span class="t" style="left:549.98px;top:894.00px;font-size:21.5px;letter-spacing:0.000px;color:#000;transform:scaleX(0.9155);transform-origin:0 0;">EXTHIFXTALRES</span><span class="t" style="left:708.60px;top:894.00px;font-size:21.5px;letter-spacing:0.000px;color:#000;transform:translateY(1.5px) scaleX(0.8000);transform-origin:0 0;">_</span><span class="t" style="left:721.74px;top:894.00px;font-size:21.5px;letter-spacing:0.000px;color:#000;transform:scaleX(0.8557);transform-origin:0 0;">16KCK</span><span class="t" style="left:783.10px;top:894.00px;font-size:21.5px;letter-spacing:0.000px;color:#000;transform:translateY(1.5px) scaleX(0.8000);transform-origin:0 0;">_</span><span class="t" style="left:794.40px;top:894.00px;font-size:21.5px;letter-spacing:0.000px;color:#000;transform:scaleX(0.9620);transform-origin:0 0;">0MS </span>
<span class="t" style="left:549.96px;top:928.00px;font-size:21.5px;letter-spacing:0.000px;color:#000;transform:scaleX(0.9411);transform-origin:0 0;">Ext. </span>
<span class="t" style="left:591.30px;top:928.00px;font-size:21.5px;letter-spacing:0.331px;color:#000;">Crystal/Resonator </span>
<span class="t" style="left:777.30px;top:928.00px;font-size:21.5px;letter-spacing:0.947px;color:#000;">High </span>
<span class="t" style="left:831.74px;top:928.00px;font-size:21.5px;letter-spacing:0.000px;color:#000;transform:scaleX(0.9561);transform-origin:0 0;">Freq.; </span>
<span class="t" style="left:892.70px;top:928.00px;font-size:21.5px;letter-spacing:0.511px;color:#000;">Start-up </span>
<span class="t" style="left:982.00px;top:928.00px;font-size:21.5px;letter-spacing:0.596px;color:#000;">time: </span>
<span class="t" style="left:1038.68px;top:928.00px;font-size:21.5px;letter-spacing:0.000px;color:#000;transform:scaleX(0.9231);transform-origin:0 0;">16K </span>
<span class="t" style="left:1081.11px;top:928.00px;font-size:21.5px;letter-spacing:0.000px;color:#000;transform:scaleX(0.8941);transform-origin:0 0;">CK </span>
<span class="t" style="left:1116.23px;top:928.00px;font-size:21.5px;letter-spacing:0.000px;color:#000;transform:scaleX(0.9727);transform-origin:0 0;">+ </span>
<span class="t" style="left:1136.80px;top:928.00px;font-size:21.5px;letter-spacing:0.000px;color:#000;transform:scaleX(0.9333);transform-origin:0 0;">4 </span>
<span class="t" style="left:1155.70px;top:928.00px;font-size:21.5px;letter-spacing:-0.010px;color:#000;">ms </span>
<span class="t" style="left:549.98px;top:954.00px;font-size:21.5px;letter-spacing:0.000px;color:#000;transform:scaleX(0.9155);transform-origin:0 0;">EXTHIFXTALRES</span><span class="t" style="left:708.60px;top:954.00px;font-size:21.5px;letter-spacing:0.000px;color:#000;transform:translateY(1.5px) scaleX(0.8000);transform-origin:0 0;">_</span><span class="t" style="left:721.74px;top:954.00px;font-size:21.5px;letter-spacing:0.000px;color:#000;transform:scaleX(0.8557);transform-origin:0 0;">16KCK</span><span class="t" style="left:783.10px;top:954.00px;font-size:21.5px;letter-spacing:0.000px;color:#000;transform:translateY(1.5px) scaleX(0.8000);transform-origin:0 0;">_</span><span class="t" style="left:794.40px;top:954.00px;font-size:21.5px;letter-spacing:0.000px;color:#000;transform:scaleX(0.9620);transform-origin:0 0;">4MS </span>
<span class="t" style="left:549.96px;top:988.00px;font-size:21.5px;letter-spacing:0.000px;color:#000;transform:scaleX(0.9411);transform-origin:0 0;">Ext. </span>
<span class="t" style="left:591.30px;top:988.00px;font-size:21.5px;letter-spacing:0.331px;color:#000;">Crystal/Resonator </span>
<span class="t" style="left:777.30px;top:988.00px;font-size:21.5px;letter-spacing:0.947px;color:#000;">High </span>
<span class="t" style="left:831.74px;top:988.00px;font-size:21.5px;letter-spacing:0.000px;color:#000;transform:scaleX(0.9561);transform-origin:0 0;">Freq.; </span>
<span class="t" style="left:892.70px;top:988.00px;font-size:21.5px;letter-spacing:0.511px;color:#000;">Start-up </span>
<span class="t" style="left:982.00px;top:988.00px;font-size:21.5px;letter-spacing:0.596px;color:#000;">time: </span>
<span class="t" style="left:1038.68px;top:988.00px;font-size:21.5px;letter-spacing:0.000px;color:#000;transform:scaleX(0.9231);transform-origin:0 0;">16K </span>
<span class="t" style="left:1081.11px;top:988.00px;font-size:21.5px;letter-spacing:0.000px;color:#000;transform:scaleX(0.8941);transform-origin:0 0;">CK </span>
<span class="t" style="left:1116.23px;top:988.00px;font-size:21.5px;letter-spacing:0.000px;color:#000;transform:scaleX(0.9727);transform-origin:0 0;">+ </span>
<span class="t" style="left:1135.80px;top:988.00px;font-size:21.5px;letter-spacing:0.443px;color:#000;">64 </span>
<span class="t" style="left:1167.90px;top:988.00px;font-size:21.5px;letter-spacing:-0.010px;color:#000;">ms </span>
<span class="t" style="left:549.98px;top:1014.00px;font-size:21.5px;letter-spacing:0.000px;color:#000;transform:scaleX(0.9155);transform-origin:0 0;">EXTHIFXTALRES</span><span class="t" style="left:708.60px;top:1014.00px;font-size:21.5px;letter-spacing:0.000px;color:#000;transform:translateY(1.5px) scaleX(0.8000);transform-origin:0 0;">_</span><span class="t" style="left:721.74px;top:1014.00px;font-size:21.5px;letter-spacing:0.000px;color:#000;transform:scaleX(0.8557);transform-origin:0 0;">16KCK</span><span class="t" style="left:783.10px;top:1014.00px;font-size:21.5px;letter-spacing:0.000px;color:#000;transform:translateY(1.5px) scaleX(0.8000);transform-origin:0 0;">_</span><span class="t" style="left:793.40px;top:1014.00px;font-size:21.5px;letter-spacing:-0.141px;color:#000;">64MS </span>

<!-- watermark -->
<svg style="left:1130px;top:970px" width="178" height="69" viewBox="1130 970 178 69">
 <text x="1221.5" y="1006.6" text-anchor="middle" font-family="'Liberation Sans','Noto Sans CJK SC',sans-serif" font-weight="900" font-size="31" fill="#083a78" stroke="#fff" stroke-width="3.4" stroke-linejoin="round" paint-order="stroke" textLength="157" lengthAdjust="spacingAndGlyphs">矿石收音机</text>
 <text x="1221.5" y="1031.4" text-anchor="middle" font-family="'Liberation Sans',sans-serif" font-weight="bold" font-size="16.5" fill="#083a78" stroke="#fff" stroke-width="3" stroke-linejoin="round" paint-order="stroke" textLength="158" lengthAdjust="spacingAndGlyphs">www.crystalradio.cn</text>
</svg>
</div>
</body>
</html>
